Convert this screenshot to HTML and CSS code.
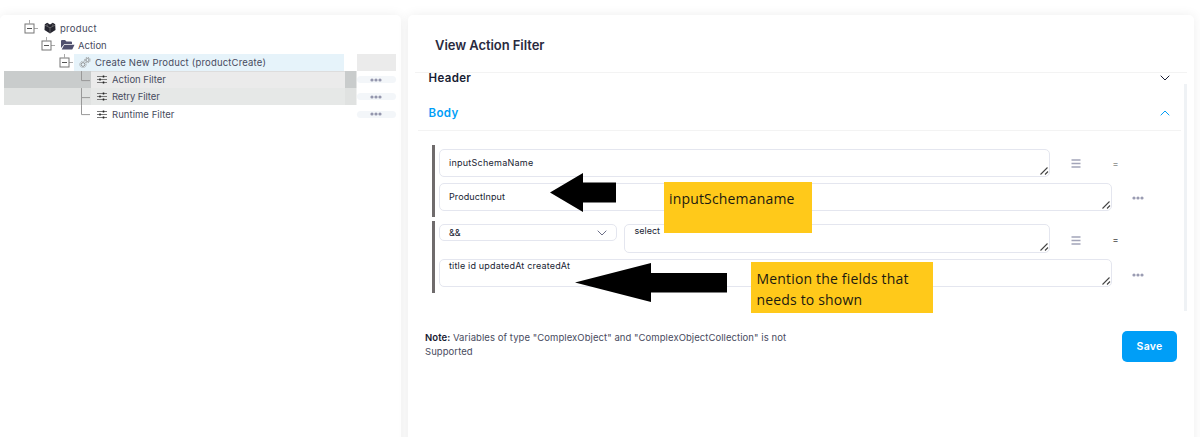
FILE: index.html
```html
<!DOCTYPE html>
<html lang="en">
<head>
<meta charset="utf-8">
<title>View Action Filter</title>
<link rel="stylesheet" href="styles.css">
</head>
<body>
<svg class="defs" width="0" height="0">
  <symbol id="toggle" viewBox="0 0 15 17"><path d="M5.500 0v3.500M10 8.500h4" stroke="#aaa" fill="none"/><rect x="1" y="4" width="9" height="9" fill="#fff" stroke="#777"/><path d="M3 8.500h5" stroke="#555"/></symbol>
  <symbol id="sliders" viewBox="0 0 10 9"><path d="M0 1.500h10M0 4.500h10M0 7.500h10" stroke="#777" fill="none"/><path d="M6.500 .4v2.200M3 3.400v2.200M6.500 6.400v2.200" stroke="#222" stroke-width="1.500"/></symbol>
  <symbol id="dots" viewBox="0 0 12 4"><circle cx="2" cy="2" r="1.600"/><circle cx="6" cy="2" r="1.600"/><circle cx="10" cy="2" r="1.600"/></symbol>
  <symbol id="grip" viewBox="0 0 9 9"><path d="M.5 8.500l7-7M5 8.500l3-3" stroke="#444" fill="none" stroke-width="1.100"/></symbol>
  <symbol id="bars" viewBox="0 0 10 9"><path d="M.5 1h9M.5 4.500h9M.5 8h9" stroke="#a3a5b9" stroke-width="1.500"/></symbol>
  <symbol id="chevron" viewBox="0 0 10 6"><path d="M.7.7L5 5 9.300.7" fill="none" stroke="currentColor"/></symbol>
</svg>
<main class="layout">
  <aside class="card tree">
    <div class="row l0"><svg class="tg"><use href="#toggle"/></svg><svg class="box" viewBox="0 0 12 12"><path d="M.8 2.200L3.200.8 6 2.400 8.800.8l2.400 1.400.3 5.800L6 11.500.5 8z" fill="#25252f"/><path d="M1 3.200l5 2.600 5-2.600M6 5.800v5.500M3.200 2.200v2M8.800 2.200v2" stroke="#999" stroke-width=".5" fill="none"/></svg><span class="ls3">product</span></div>
    <div class="row l1"><svg class="tg"><use href="#toggle"/></svg><svg class="folder" viewBox="0 0 14 10"><path d="M0 8V1q0-1 1-1h3l1.500 1.500H10q1 0 1 1V4H4Q3 4 2.500 5z M.7 9.500L3 5.300Q3.300 4.700 4 4.700h9.500L11.500 9q-.3.500-1 .5z" fill="#50506e"/></svg><span>Action</span></div>
    <div class="row l2"><svg class="tg"><use href="#toggle"/></svg><div class="cur"><svg class="gears" viewBox="0 0 12 11"><g fill="none" stroke="#888" stroke-width=".9"><circle cx="4" cy="7.500" r="1.900"/><circle cx="8.500" cy="3" r="1.600"/><path stroke-dasharray="1 1.200" d="M.8 7.500a3.200 3.200 0 1 0 6.400 0a3.200 3.200 0 1 0-6.400 0M5.800 3a2.700 2.700 0 1 0 5.400 0a2.700 2.700 0 1 0-5.400 0"/></g></svg><span class="ls2">Create New Product (productCreate)</span></div><i class="blank"></i></div>
    <div class="row leaf dark"><svg class="elbow" viewBox="0 0 10 17"><path d="M.5 0v9.500H9" fill="none" stroke="#999"/></svg><div class="item"><svg class="sl"><use href="#sliders"/></svg><span>Action Filter</span></div><i class="edge"></i><i class="pill"><svg><use href="#dots"/></svg></i></div>
    <div class="row leaf mid"><svg class="elbow" viewBox="0 0 10 17"><path d="M.5 0v17M.5 9.500H9" fill="none" stroke="#999"/></svg><div class="item"><svg class="sl"><use href="#sliders"/></svg><span class="tight">Retry Filter</span></div><i class="edge"></i><i class="pill"><svg><use href="#dots"/></svg></i></div>
    <div class="row leaf"><svg class="elbow" viewBox="0 0 10 17"><path d="M.5 0v9.500H9" fill="none" stroke="#999"/></svg><div class="item"><svg class="sl"><use href="#sliders"/></svg><span class="ls05">Runtime Filter</span></div><i class="edge"></i><i class="pill"><svg><use href="#dots"/></svg></i></div>
  </aside>
  <section class="card panel">
    <header class="title">View Action Filter</header>
    <div class="scroll">
      <div class="acc head"><span>Header</span><svg class="chev"><use href="#chevron"/></svg></div>
      <div class="acc body"><span>Body</span><svg class="chev up"><use href="#chevron"/></svg></div>
      <div class="group">
        <div class="line"><div class="field short"><span class="ls25">inputSchemaName</span><svg class="grip"><use href="#grip"/></svg></div><svg class="bars"><use href="#bars"/></svg><span class="eq soft">=</span></div>
        <div class="line"><div class="field long"><span class="ls1">ProductInput</span><svg class="grip"><use href="#grip"/></svg></div><svg class="more"><use href="#dots"/></svg></div>
      </div>
      <div class="group second">
        <div class="line"><div class="select"><span>&amp;&amp;</span><svg class="chev"><use href="#chevron"/></svg></div><div class="field half top"><span>select</span><svg class="grip"><use href="#grip"/></svg></div><svg class="bars"><use href="#bars"/></svg><span class="eq">=</span></div>
        <div class="line"><div class="field long top"><span class="ls2">title id updatedAt createdAt</span><svg class="grip"><use href="#grip"/></svg></div><svg class="more"><use href="#dots"/></svg></div>
      </div>
      <i class="bar"></i>
    </div>
    <footer class="foot"><p class="note"><b>Note:</b> Variables of type "ComplexObject" and "ComplexObjectCollection" is not<br>Supported</p><button class="save">Save</button></footer>
  </section>
</main>
<svg class="arrow one" viewBox="0 0 67 39"><path d="M0 19.500L33 0v9.500h33v20H33V39z"/></svg>
<svg class="arrow two" viewBox="0 0 153 40"><path d="M0 19.500L76 0v10h76v19.500H76V39z"/></svg>
<div class="sticky a">inputSchemaname</div>
<div class="sticky b">Mention the fields that<br>needs to shown</div>
</body>
</html>
```
FILE: styles.css
```css
* { box-sizing: border-box; }
body { margin: 0; height: 437px; overflow: hidden; position: relative; background: #fff; font-family: Inter, "Open Sans", sans-serif; color: #484b60; }
.defs { position: absolute; }
svg { display: block; flex: none; }
span { white-space: nowrap; }
.ls05 { letter-spacing: .05px; }
.ls1 { letter-spacing: .1px; }
.ls2 { letter-spacing: .18px; }
.ls25 { letter-spacing: .25px; }
.ls3 { letter-spacing: .3px; }
.tight { letter-spacing: -.1px; }
.layout { display: flex; gap: 7px; padding-top: 15px; }
.card { height: 440px; background: #fff; border-radius: 5px; box-shadow: 0 0 12px rgba(0,0,0,.07); }
.tree { width: 400.500px; padding: 4.500px 4px 0 4px; font-size: 9.500px; }
.row { display: flex; align-items: center; height: 17.200px; }
.l0 { padding-left: 20px; }
.l1 { padding-left: 37px; }
.l2 { padding-left: 54.500px; }
.tg { width: 15px; height: 17px; }
.box { width: 12px; height: 12px; margin: 0 4px 0 5px; }
.folder { width: 14px; height: 10px; margin: 0 3px 0 5px; }
.cur { display: flex; align-items: center; width: 270.500px; height: 17px; background: #e6f3fa; }
.gears { width: 12px; height: 11px; margin: 0 4px 0 5.500px; }
.blank { width: 39px; height: 17px; margin-left: 12.500px; background: #ebebeb; }
.elbow { width: 10px; height: 17.200px; margin-left: 77px; }
.item { display: flex; align-items: center; width: 254px; height: 17.200px; padding-left: 6px; }
.sl { width: 10px; height: 9px; margin-right: 5px; }
.edge { width: 11.500px; height: 17.200px; }
.pill { display: flex; align-items: center; justify-content: center; width: 39px; height: 7px; border-radius: 4px; background: #f3f6f9; fill: #9496ad; }
.pill svg { width: 12px; height: 4px; }
.dark, .mid { background: linear-gradient(#c9cccc, #c9cccc) 0 0 / 352.500px 100% no-repeat; }
.dark .item { background: #ebebeb; box-shadow: inset 0 1px #ddd; padding-bottom: 1px; }
.mid { background-image: linear-gradient(#e0e2e1, #e0e2e1); }
.mid .item { background: #e6e8e7; }
.panel { width: 786.500px; padding: 0 7px; }
.title { height: 58px; padding: 21px 0 0 20.500px; border-bottom: 1px solid #f3f3f3; font-size: 13px; font-weight: 600; letter-spacing: -.06px; line-height: 19px; color: #2a2a3e; }
.scroll { position: relative; height: 240px; padding: 0 6px 0 3px; }
.acc { display: flex; align-items: center; justify-content: space-between; padding: 0 11px; font-size: 11.500px; font-weight: 600; letter-spacing: .35px; color: #181c32; }
.head { height: 10px; }
.acc.body { height: 48px; padding-top: 12px; border-bottom: 1px solid #f3f3f3; color: #009ef7; }
.chev { width: 10px; height: 6px; }
.up { transform: scaleY(-1); }
.group { display: flex; flex-direction: column; gap: 6px; width: 730px; height: 72px; margin: 14px 0 0 14.500px; padding: 4px 0 0 4px; border-left: 3px solid #6f6b6c; }
.group.second { margin-top: 4px; padding-top: 3px; }
.line { display: flex; align-items: center; height: 28px; }
.second .line:first-child { height: 29px; }
.field, .select { display: flex; align-items: center; position: relative; padding: 0 0 1px 9px; border: 1px solid #e4e6ef; border-radius: 5px; background: #fff; font-size: 9px; color: #181c32; }
.field { height: 100%; }
.top { align-items: flex-start; line-height: 12px; }
.short { width: 611px; }
.long { width: 673px; }
.half { width: 426px; margin-left: 7px; padding-left: 9.500px; }
.select { width: 178px; height: 17px; align-self: flex-start; justify-content: space-between; padding-right: 9px; }
.select .chev { color: #6c6f88; margin-top: 1px; }
.grip { position: absolute; right: 0; bottom: 1px; width: 9px; height: 9px; }
.bars { width: 10px; height: 9px; margin-left: 21px; }
.eq { margin: 1px 0 0 31.500px; font-size: 9px; line-height: 12px; font-weight: 500; color: #444; }
.soft { color: #888; }
.second .bars { margin-top: 3px; }
.second .eq { margin-top: 3px; }
.more { width: 12px; height: 4px; margin: 2px 0 0 20px; fill: #9a9cb2; }
.second .more { margin-top: 4px; }
.bar { position: absolute; right: 0; top: 11px; width: 3px; height: 227px; background: #eff2f5; }
.foot { display: flex; justify-content: space-between; padding: 17px 10px 0 10.500px; }
.note { margin: 1px 0 0; font-size: 9.500px; line-height: 14px; letter-spacing: .065px; }
.note b { font-weight: 600; color: #181c32; }
.save { width: 55px; height: 31px; margin-top: 1px; padding: 0; border: 0; border-radius: 5px; background: #009ef7; color: #fff; font: 600 10.500px Inter, sans-serif; letter-spacing: .25px; }
.arrow { position: absolute; fill: #000; }
.one { left: 550px; top: 173px; width: 67px; height: 39px; }
.two { left: 575px; top: 263px; width: 153px; height: 40px; }
.sticky { position: absolute; background: #ffc91a; color: #1c1a10; font: 14px/21px "Open Sans", sans-serif; letter-spacing: .17px; padding: 6px 5px; }
.a { left: 664px; top: 182px; width: 147.500px; height: 50.500px; }
.b { left: 751px; top: 262px; width: 181.500px; height: 50.500px; padding-left: 5.500px; }
```
